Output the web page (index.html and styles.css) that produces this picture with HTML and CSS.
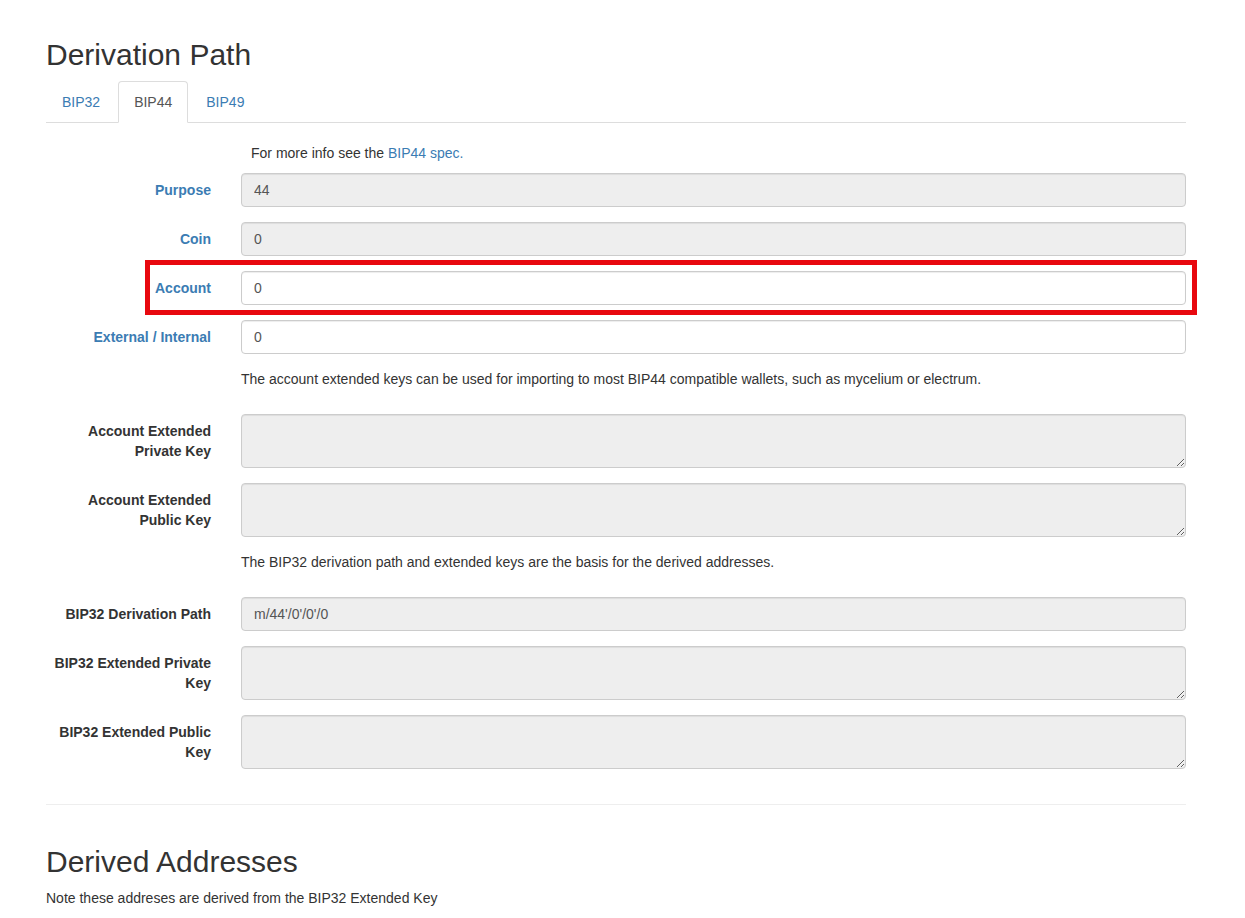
FILE: index.html
```html
<!DOCTYPE html>
<html>
<head>
<meta charset="utf-8">
<title>Derivation Path</title>
<link rel="stylesheet" href="styles.css">
</head>
<body>
<div class="container">
  <div class="section">
    <h2 class="heading">Derivation Path</h2>
    <ul class="nav-tabs">
      <li><a href="#">BIP32</a></li>
      <li class="active"><a href="#">BIP44</a></li>
      <li><a href="#">BIP49</a></li>
    </ul>
    <div class="tab-content">
      <div class="spacer-line"></div>
      <div class="info-row">
        <div class="info-spacer"></div>
        <p class="info-text">For more info see the <a href="#">BIP44 spec.</a></p>
      </div>
      <div class="form-group">
        <label class="label-col"><a href="#">Purpose</a></label>
        <div class="field-col"><input class="form-control" type="text" value="44" readonly></div>
      </div>
      <div class="form-group">
        <label class="label-col"><a href="#">Coin</a></label>
        <div class="field-col"><input class="form-control" type="text" value="0" readonly></div>
      </div>
      <div class="form-group highlighted">
        <label class="label-col"><a href="#">Account</a></label>
        <div class="field-col"><input class="form-control editable" type="text" value="0"></div>
      </div>
      <div class="form-group">
        <label class="label-col"><a href="#">External / Internal</a></label>
        <div class="field-col"><input class="form-control editable" type="text" value="0"></div>
      </div>
      <div class="form-group">
        <div class="label-col"></div>
        <div class="field-col"><p class="desc">The account extended keys can be used for importing to most BIP44 compatible wallets, such as mycelium or electrum.</p></div>
      </div>
      <div class="form-group">
        <label class="label-col">Account Extended Private Key</label>
        <div class="field-col"><textarea class="form-control" rows="2" readonly></textarea></div>
      </div>
      <div class="form-group">
        <label class="label-col">Account Extended Public Key</label>
        <div class="field-col"><textarea class="form-control" rows="2" readonly></textarea></div>
      </div>
      <div class="form-group">
        <div class="label-col"></div>
        <div class="field-col"><p class="desc">The BIP32 derivation path and extended keys are the basis for the derived addresses.</p></div>
      </div>
      <div class="form-group">
        <label class="label-col">BIP32 Derivation Path</label>
        <div class="field-col"><input class="form-control" type="text" value="m/44'/0'/0'/0" readonly></div>
      </div>
      <div class="form-group">
        <label class="label-col">BIP32 Extended Private Key</label>
        <div class="field-col"><textarea class="form-control" rows="2" readonly></textarea></div>
      </div>
      <div class="form-group">
        <label class="label-col">BIP32 Extended Public Key</label>
        <div class="field-col"><textarea class="form-control" rows="2" readonly></textarea></div>
      </div>
    </div>
  </div>
  <hr class="divider">
  <div class="section">
    <h2 class="heading">Derived Addresses</h2>
    <p class="note">Note these addreses are derived from the BIP32 Extended Key</p>
  </div>
</div>
</body>
</html>
```

FILE: styles.css
```css
html, body {
  margin: 0;
  padding: 0;
  background: #fff;
}
body {
  font-family: "Liberation Sans", Arial, sans-serif;
  font-size: 14px;
  line-height: 20px;
  color: #333;
}
* { box-sizing: border-box; }
a { color: #3b7cb3; text-decoration: none; }

.container {
  width: 1170px;
  padding: 18px 15px 0;
  margin-left: 31px;
}
.section { display: flow-root; }
.tab-content { display: flow-root; }

.heading {
  font-size: 30px;
  font-weight: 400;
  line-height: 33px;
  margin: 20px 0 10px;
  color: #333;
}

.nav-tabs {
  list-style: none;
  margin: 0;
  padding: 0;
  display: flex;
  border-bottom: 1px solid #ddd;
}
.nav-tabs li {
  margin-bottom: -1px;
}
.nav-tabs a {
  display: block;
  padding: 10px 15px;
  margin-right: 2px;
  border: 1px solid transparent;
  border-radius: 4px 4px 0 0;
  color: #3b7cb3;
  line-height: 20px;
}
.nav-tabs li.active a {
  color: #555;
  background: #fff;
  border-color: #ddd #ddd transparent;
}

.spacer-line { height: 20px; }

.info-row { display: flex; }
.info-spacer { width: 16.6667%; }
.info-text { margin: 0 0 10px; padding-left: 15px; }

.form-group {
  display: flex;
  margin: 0 -15px 15px;
}
.label-col {
  width: 16.6667%;
  flex: none;
  padding: 7px 15px 0;
  text-align: right;
  font-weight: bold;
}
.field-col {
  width: 83.3333%;
  flex: none;
  padding: 0 15px;
}
.desc { margin: 0 0 10px; }

.form-control {
  display: block;
  width: 100%;
  height: 34px;
  padding: 6px 12px;
  font-family: "Liberation Sans", Arial, sans-serif;
  font-size: 14px;
  line-height: 20px;
  color: #555;
  background: #eee;
  border: 1px solid #ccc;
  border-radius: 4px;
  box-shadow: inset 0 1px 1px rgba(0,0,0,.075);
  margin: 0;
  outline: none;
}
.form-control.editable { background: #fff; }
textarea.form-control {
  height: 54px;
  resize: vertical;
}

.highlighted { position: relative; }
.highlighted::after {
  content: "";
  position: absolute;
  left: 114px;
  right: 4px;
  top: -11px;
  bottom: -10px;
  border: 5px solid #e8080f;
  pointer-events: none;
}

.divider {
  margin: 20px 0;
  border: 0;
  border-top: 1px solid #eee;
}
.note { margin: 0 0 10px; }
```
